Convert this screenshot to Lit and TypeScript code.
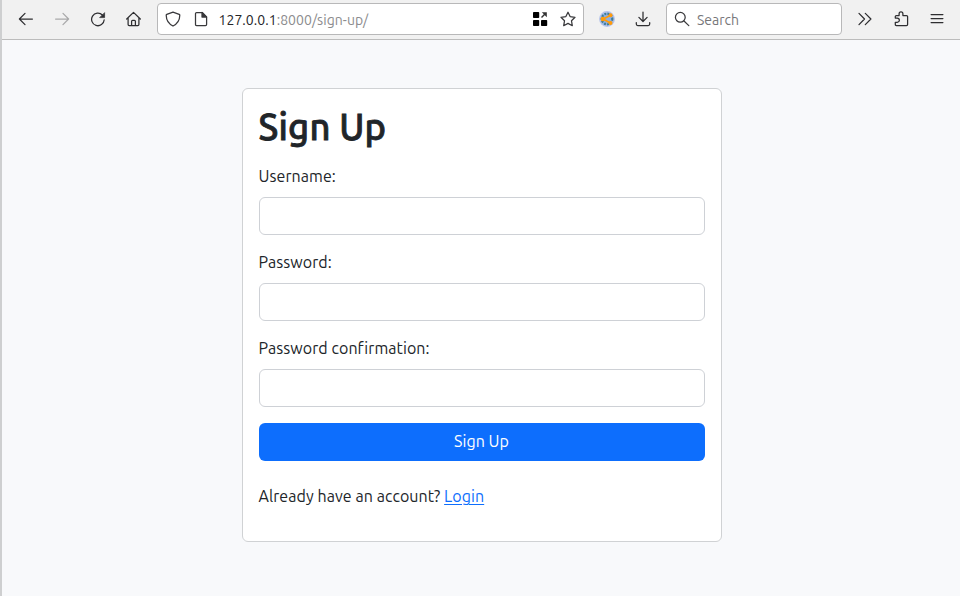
import { LitElement, html, css, svg } from "lit";
import { customElement } from "lit/decorators.js";

const icon = (w: number, body: unknown) =>
  html`<svg width=${w} height=${w} viewBox="0 0 16 16" fill="none" stroke="currentColor" stroke-width="1.25" stroke-linecap="round" stroke-linejoin="round">${body}</svg>`;

const icons = {
  back: svg`<path d="M14.4 8H1.4M7 2.4 1.4 8 7 13.6"/>`,
  forward: svg`<path d="M1.6 8h13M9 2.4 14.6 8 9 13.6"/>`,
  reload: svg`<path d="M14.2 8.8A6.3 6.3 0 1 1 12.4 4"/><path d="M14.6 2v4.6H10z" fill="currentColor" stroke-width=".7"/>`,
  home: svg`<path d="M.7 8 7.500 1.400 14.300 8M2.100 7v6.400q0 1.100 1.100 1.100h8.600q1.100 0 1.100-1.100V7M5.600 14.300v-4q0-1 1-1h1.800q1 0 1 1v4"/>`,
  shield: svg`<path d="M8 1.100 14.200 3.400q.6.300.6.900C14.700 9 12.600 12.800 8 15 3.400 12.800 1.300 9 1.200 4.300q0-.6.6-.9z"/>`,
  page: svg`<path d="M3.600 1.500h5.600l4.400 4.400v7.500q0 1.100-1.100 1.100H3.600q-1.100 0-1.100-1.100V2.600q0-1.100 1.100-1.100z"/><path d="M9 1.500v4.600h4.600z" fill="currentColor"/>`,
  tiles: svg`<g fill="#000" stroke="none"><rect x="1" y="1" width="6.200" height="6" rx=".8"/><rect x="1" y="9" width="6.200" height="6" rx=".8"/><rect x="9" y="9" width="6.200" height="6" rx=".8"/></g><path d="M9.500 6.500 13.500 2.500" stroke="#333" stroke-width="1.500" stroke-linecap="butt"/><path d="M9.800 1.300h5v5z" fill="#333" stroke="none"/>`,
  star: svg`<path d="m8 1.200 2.100 4.400 4.900.7-3.500 3.500.8 4.900L8 12.400l-4.300 2.300.8-4.900L1 6.300l4.900-.7z"/>`,
  globe: svg`<circle cx="8" cy="8" r="7.900" fill="#b3c1ea" stroke="none"/><circle cx="8" cy="8" r="6.200" fill="#8fafe0" stroke="none"/><circle cx="8" cy="8" r="5.300" stroke="#3f7d94" stroke-width="2.200" stroke-dasharray="1.800 1.300" stroke-linecap="butt"/><path d="M11.200 4.500 4.200 8l7 4" stroke="#ff9b0a" stroke-width="1.800"/><g fill="#ff9b0a" stroke="none"><circle cx="11.500" cy="4.200" r="2"/><circle cx="3.800" cy="8" r="2.200"/><circle cx="11.500" cy="12" r="2"/></g>`,
  download: svg`<path d="M8 1v9.200M3.900 6.400 8 10.500l4.100-4.100M1.300 11.500v1.600q0 1.500 1.500 1.500h10.400q1.500 0 1.500-1.500v-1.600"/>`,
  search: svg`<circle cx="6.300" cy="6.300" r="4.900"/><path d="m10 10 4.800 4.600"/>`,
  more: svg`<path d="m2 2.400 5.500 5.600L2 13.600M8.300 2.400l5.600 5.600-5.600 5.600"/>`,
  puzzle: svg`<path d="M2.300 7V5.600q0-1.100 1.100-1.100h2.700V2.800a1.900 1.900 0 0 1 3.800 0v1.700h3.600q1.100 0 1.100 1.100v8q0 1.100-1.100 1.100H3.400q-1.100 0-1.100-1.100v-2.300h1.900a1.900 1.900 0 0 0 0-4.300z"/>`,
  menu: svg`<path d="M2.100 3.500h11.800M2.100 7.500h11.800M2.100 11.500h11.800"/>`,
};

@customElement("app-root")
export class AppRoot extends LitElement {
  static styles = css`
    :host {
      display: block;
      box-sizing: border-box;
      height: 596px;
      overflow: hidden;
      border-left: 2px solid #cecfd0;
      background: #f8f9fb;
      color: #212529;
      font-family: Ubuntu, "Noto Sans", sans-serif;
      font-size: 16px;
    }
    * { box-sizing: border-box; }
    svg { display: block; flex: none; }
    .bar {
      display: grid;
      grid-template-columns: 36px 36px 36px 36px 5px 427px 5px 36px 36px 5px 176px 5px 36px 36px 36px;
      height: 40px;
      padding: 3px 0 4px 6px;
      border-bottom: 1px solid #bcbcbc;
      background: #f1f1f1;
      color: #2e2e31;
      align-items: center;
    }
    .tool { display: grid; place-items: center; }
    .off { color: #a9a9aa; }
    .field {
      display: flex;
      align-items: center;
      height: 32px;
      padding: 0 7px;
      border: 1px solid #b8b8b9;
      border-radius: 4px;
      background: #fff;
      font-size: 14px;
      color: #39393c;
    }
    .url { flex: 1; margin-left: 9.5px; color: #8b8b8d; letter-spacing: 0.05px; white-space: pre; padding-top: 1px; }
    .url b { color: #252529; font-weight: 400; }
    .page { margin-left: 12px; }
    .star { margin-left: 12px; }
    .find { margin-left: 7px; padding-top: 1px; color: #77777a; }
    .card {
      width: 480px;
      height: 454px;
      margin: 48px 0 0 240px;
      padding: 16px;
      border: 1px solid #d0d2d4;
      border-radius: 6px;
      background: #fff;
    }
    h1 {
      margin: 0 0 12px;
      height: 48px;
      font-size: 36.4px;
      line-height: 44px;
      font-weight: 500;
      letter-spacing: 0.2px;
      -webkit-text-stroke: 0.8px currentColor;
      white-space: nowrap;
    }
    h1, label, p { text-indent: -0.5px; }
    label, p, button { letter-spacing: 0.07px; }
    label { display: block; height: 24px; line-height: 23px; margin-bottom: 8px; }
    input {
      display: block;
      width: 100%;
      height: 38px;
      margin-bottom: 16px;
      border: 1px solid #ced1d6;
      border-radius: 6px;
      background: #fff;
    }
    button {
      display: block;
      width: 100%;
      height: 38px;
      padding: 0 1px 2px 0;
      border: 0;
      border-radius: 6px;
      background: #0d6efd;
      color: #fff;
      font: inherit;
    }
    p { margin: 24px 0 0; line-height: 23px; white-space: nowrap; }
    a { color: #0d6efd; text-decoration: underline 1px; text-underline-offset: 2px; }
  `;

  private tool(body: unknown, cls = "") {
    return html`<span class="tool ${cls}">${icon(16, body)}</span>`;
  }

  render() {
    return html`
      <header class="bar">
        ${this.tool(icons.back)}${this.tool(icons.forward, "off")}${this.tool(icons.reload)}${this.tool(icons.home)}
        <i></i>
        <div class="field">
          ${icon(16, icons.shield)}<span class="page">${icon(16, icons.page)}</span>
          <span class="url"><b>127.0.0.1</b>:8000/sign-up/</span>
          ${icon(16, icons.tiles)}<span class="star">${icon(16, icons.star)}</span>
        </div>
        <i></i>
        ${this.tool(icons.globe)}${this.tool(icons.download)}
        <i></i>
        <div class="field">${icon(16, icons.search)}<span class="find">Search</span></div>
        <i></i>
        ${this.tool(icons.more)}${this.tool(icons.puzzle)}${this.tool(icons.menu)}
      </header>
      <main class="card">
        <h1>Sign Up</h1>
        <label for="u">Username:</label><input id="u" />
        <label for="p">Password:</label><input id="p" type="password" />
        <label for="c">Password confirmation:</label><input id="c" type="password" />
        <button>Sign Up</button>
        <p>Already have an account? <a>Login</a></p>
      </main>
    `;
  }
}
